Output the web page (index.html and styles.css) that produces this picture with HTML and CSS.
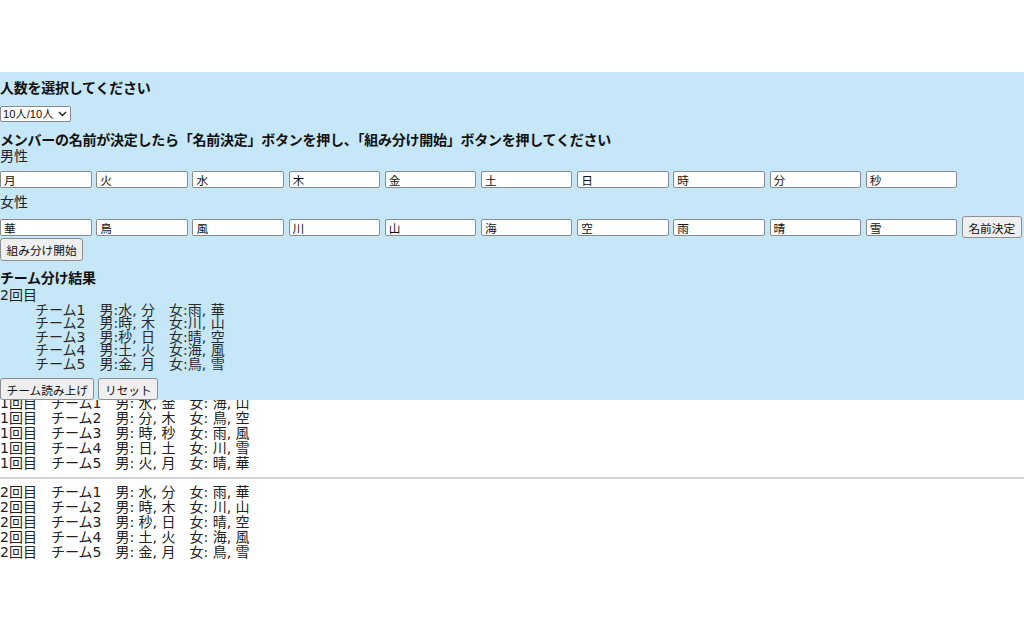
FILE: index.html
```html
<!DOCTYPE html>
<html lang="ja">
<head>
<meta charset="utf-8">
<title>チーム分け</title>
<link rel="stylesheet" href="styles.css">
</head>
<body>
<div class="panel">
  <div class="title t1">人数を選択してください</div>
  <div class="select-wrap">
    <select class="count"><option>10人/10人</option></select>
    <svg class="chev" width="9" height="6" viewBox="0 0 9 6"><path d="M1 1 L4.5 4.5 L8 1" fill="none" stroke="#222" stroke-width="1.4"/></svg>
  </div>
  <div class="title t2">メンバーの名前が決定したら「名前決定」ボタンを押し、「組み分け開始」ボタンを押してください</div>
  <div class="label">男性</div>
  <div class="row r1">
    <input class="name" value="月"><input class="name" value="火"><input class="name" value="水"><input class="name" value="木"><input class="name" value="金"><input class="name" value="土"><input class="name" value="日"><input class="name" value="時"><input class="name" value="分"><input class="name" value="秒">
  </div>
  <div class="label l2">女性</div>
  <div class="row r2">
    <input class="name" value="華"><input class="name" value="鳥"><input class="name" value="風"><input class="name" value="川"><input class="name" value="山"><input class="name" value="海"><input class="name" value="空"><input class="name" value="雨"><input class="name" value="晴"><input class="name" value="雪">
    <button class="btn">名前決定</button>
  </div>
  <button class="btn start">組み分け開始</button>
  <div class="title t3">チーム分け結果</div>
  <div class="round">2回目</div>
  <ul class="teams">
    <li>チーム1　男:水, 分　女:雨, 華</li>
    <li>チーム2　男:時, 木　女:川, 山</li>
    <li>チーム3　男:秒, 日　女:晴, 空</li>
    <li>チーム4　男:土, 火　女:海, 風</li>
    <li>チーム5　男:金, 月　女:鳥, 雪</li>
  </ul>
  <div class="actions">
    <button class="btn">チーム読み上げ</button>
    <button class="btn">リセット</button>
  </div>
</div>
<div class="history">
  <div class="block">
    <div class="line">1回目　チーム1　男: 水, 金　女: 海, 山</div>
    <div class="line">1回目　チーム2　男: 分, 木　女: 鳥, 空</div>
    <div class="line">1回目　チーム3　男: 時, 秒　女: 雨, 風</div>
    <div class="line">1回目　チーム4　男: 日, 土　女: 川, 雪</div>
    <div class="line">1回目　チーム5　男: 火, 月　女: 晴, 華</div>
  </div>
  <hr class="sep">
  <div class="block">
    <div class="line">2回目　チーム1　男: 水, 分　女: 雨, 華</div>
    <div class="line">2回目　チーム2　男: 時, 木　女: 川, 山</div>
    <div class="line">2回目　チーム3　男: 秒, 日　女: 晴, 空</div>
    <div class="line">2回目　チーム4　男: 土, 火　女: 海, 風</div>
    <div class="line">2回目　チーム5　男: 金, 月　女: 鳥, 雪</div>
  </div>
</div>
</body>
</html>
```

FILE: styles.css
```css
html, body {
  margin: 0;
  padding: 0;
  background: #ffffff;
}
body {
  padding-top: 72px;
  font-family: "DejaVu Sans", "Noto Sans CJK JP", sans-serif;
  font-size: 14px;
  color: #222222;
}
.panel {
  position: relative;
  z-index: 1;
  background: #c6e7f7;
  overflow: hidden;
}
.title {
  font-family: "Noto Sans CJK JP", sans-serif;
  font-weight: bold;
  color: #111111;
  white-space: nowrap;
  letter-spacing: -0.25px;
}
.t1 {
  margin-top: 5px;
  line-height: 20px;
}
.select-wrap {
  position: relative;
  width: 71px;
  height: 16px;
  margin-top: 9px;
}
.count {
  display: block;
  box-sizing: border-box;
  width: 71px;
  height: 16px;
  margin: 0;
  padding: 0 0 0 2px;
  -webkit-appearance: none;
  appearance: none;
  font-family: "Liberation Sans", "Noto Sans CJK JP", sans-serif;
  font-size: 11.2px;
  line-height: 14px;
  color: #111;
  background: #ffffff;
  border: 1px solid #8a8a8a;
  border-radius: 2px;
}
.chev {
  position: absolute;
  left: 58px;
  top: 5px;
  pointer-events: none;
}
.t2 {
  margin-top: 8.5px;
  line-height: 17px;
}
.label {
  line-height: 17px;
}
.l2 {
  margin-top: 5.5px;
}
.row {
  display: flex;
  align-items: center;
  gap: 4.7px;
}
.r1 {
  margin-top: 6.5px;
}
.r2 {
  margin-top: 5.5px;
  height: 22px;
}
.name {
  box-sizing: border-box;
  width: 91.5px;
  height: 17px;
  margin: 0;
  padding: 0 3px;
  font-family: "Liberation Sans", "Noto Sans CJK JP", sans-serif;
  font-size: 11.7px;
  color: #111;
  background: #ffffff;
  border: 1px solid #8a8a8a;
  border-radius: 2px;
}
.btn {
  box-sizing: border-box;
  height: 22px;
  margin: 0;
  padding: 0 5.5px;
  font-family: "Liberation Sans", "Noto Sans CJK JP", sans-serif;
  font-size: 11.7px;
  color: #111;
  background: #efefef;
  border: 1px solid #8f8f8f;
  border-radius: 3px;
}
.start {
  display: block;
  height: 23px;
}
.t3 {
  margin-top: 6.5px;
  line-height: 19px;
}
.round {
  line-height: 17px;
}
.teams {
  list-style: none;
  margin: 0;
  padding: 0 0 0 35px;
  line-height: 13.5px;
  color: #2a2a2a;
}
.actions {
  display: flex;
  gap: 4px;
  margin-top: 7px;
}
.history {
  margin-top: -4.5px;
  line-height: 15px;
  color: #222222;
}
.sep {
  border: none;
  border-top: 2px solid #d2d2d2;
  height: 0;
  margin: 6px 0;
}
```
